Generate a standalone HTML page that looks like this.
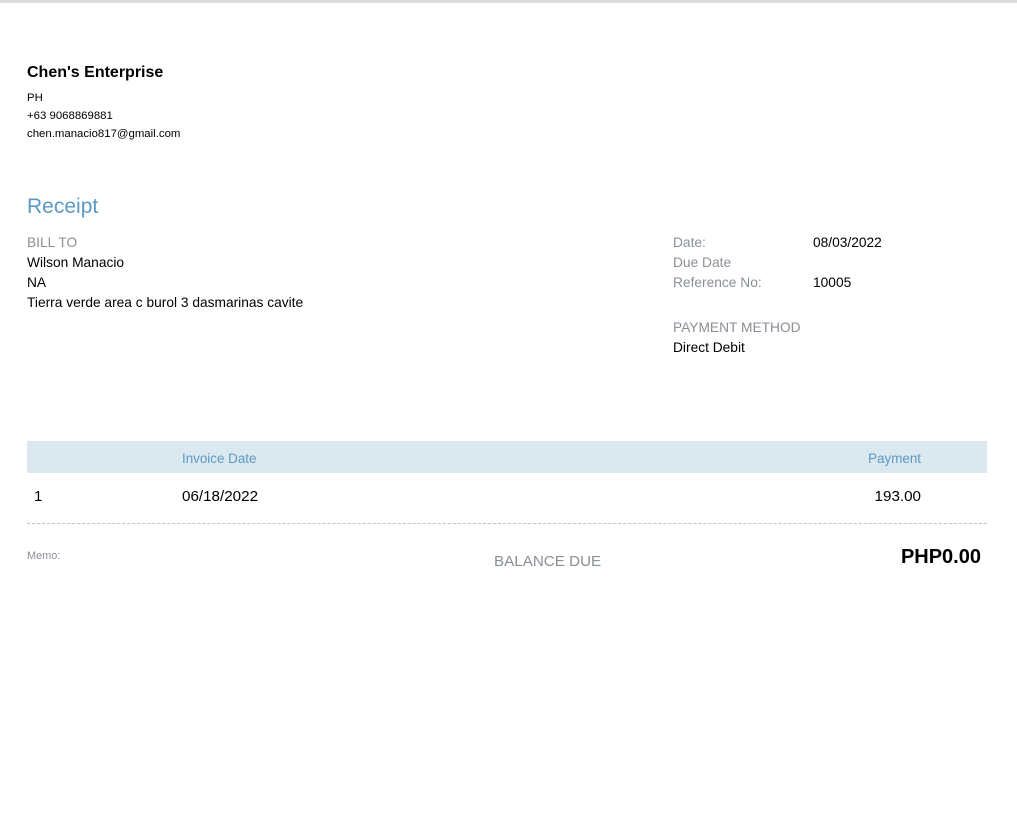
<!DOCTYPE html>
<html><head><meta charset="utf-8"><style>
body{margin:0;width:1017px;height:828px;background:#fff;font-family:"Liberation Sans",Arial,sans-serif;position:relative;overflow:hidden}
.a{position:absolute;white-space:nowrap}
.g{color:#8a8f96}
.t{font-size:13.75px;line-height:16px}
</style></head><body>
<div class="a" style="left:0;top:0;width:1017px;height:3px;background:#dcdcdc"></div>
<div class="a" style="left:27px;top:63px;font-size:16px;font-weight:bold;line-height:20px">Chen's Enterprise</div>
<div class="a" style="left:27px;top:91px;font-size:11.4px;line-height:14px">PH</div>
<div class="a" style="left:27px;top:109px;font-size:11.4px;line-height:14px">+63 9068869881</div>
<div class="a" style="left:27px;top:127px;font-size:11.4px;line-height:14px">chen.manacio817@gmail.com</div>
<div class="a" style="left:27px;top:194px;font-size:21px;line-height:26px;color:#5a9ac4">Receipt</div>
<div class="a g t" style="left:27px;top:235px">BILL TO</div>
<div class="a t" style="left:27px;top:255px">Wilson Manacio</div>
<div class="a t" style="left:27px;top:275px">NA</div>
<div class="a t" style="left:27px;top:295px">Tierra verde area c burol 3 dasmarinas cavite</div>
<div class="a g t" style="left:673px;top:235px">Date:</div>
<div class="a t" style="left:813px;top:235px">08/03/2022</div>
<div class="a g t" style="left:673px;top:255px">Due Date</div>
<div class="a g t" style="left:673px;top:275px">Reference No:</div>
<div class="a t" style="left:813px;top:275px">10005</div>
<div class="a g t" style="left:673px;top:320px">PAYMENT METHOD</div>
<div class="a t" style="left:673px;top:340px">Direct Debit</div>
<div class="a" style="left:27px;top:441px;width:960px;height:32px;background:#dce8f0"></div>
<div class="a" style="left:182px;top:451px;font-size:13.4px;line-height:16px;color:#5a9ac4">Invoice Date</div>
<div class="a" style="right:96px;top:451px;font-size:13.4px;line-height:16px;color:#5a9ac4">Payment</div>
<div class="a" style="left:34px;top:488px;font-size:15px;line-height:18px">1</div>
<div class="a" style="left:182px;top:488px;font-size:15.2px;line-height:18px">06/18/2022</div>
<div class="a" style="right:96px;top:488px;font-size:15.2px;line-height:18px">193.00</div>
<div class="a" style="left:27px;top:523px;width:960px;border-top:1px dashed #c4c4c4"></div>
<div class="a g" style="left:27px;top:550px;font-size:10.9px;line-height:12px">Memo:</div>
<div class="a g" style="left:494px;top:553px;font-size:15.2px;line-height:18px">BALANCE DUE</div>
<div class="a" style="right:36px;top:545px;font-size:20px;font-weight:bold;line-height:24px">PHP0.00</div>
</body></html>
